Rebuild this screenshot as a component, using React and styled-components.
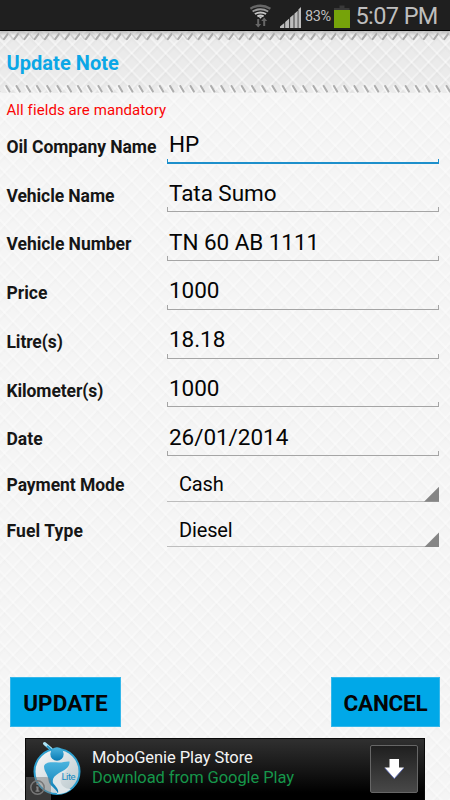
import React from "react";
import styled, { createGlobalStyle } from "styled-components";

const GlobalStyle = createGlobalStyle`
  * { box-sizing: border-box; }
  body { margin: 0; background: #f4f4f4; font-family: Roboto, "Noto Sans", sans-serif; }
`;

const Screen = styled.main`
  width: 450px;
  height: 800px;
  overflow: hidden;
  display: flex;
  flex-direction: column;
  color: #050505;
  background:
    repeating-linear-gradient(46deg, rgba(255,255,255,.35) 0 .8px, transparent 2px 8px, rgba(0,0,0,.01) 11px, rgba(255,255,255,.35) 12.2px),
    repeating-linear-gradient(-46deg, rgba(255,255,255,.35) 0 .8px, transparent 2px 8px, rgba(0,0,0,.013) 11px, rgba(255,255,255,.35) 12.2px),
    #f5f5f5;
`;

const StatusBar = styled.header`
  height: 31px;
  flex: none;
  background: #1f1f1f;
  border-bottom: 1px solid #000;
  display: flex;
  justify-content: flex-end;
  padding-right: 12px;
`;

const StatusIcons = styled.svg`
  width: 56px;
  height: 30px;
  flex: none;
`;

const Percent = styled.span`
  width: 30px;
  padding-left: 1px;
  font-size: 14.5px;
  line-height: 34px;
  color: #bebebe;
  white-space: nowrap;
  letter-spacing: -0.35px;
`;

const Battery = styled.svg`
  width: 20px;
  height: 30px;
  flex: none;
`;

const Clock = styled.span`
  width: 84px;
  padding-left: 1.5px;
  font-size: 23.5px;
  line-height: 32px;
  color: #bebebe;
  white-space: nowrap;
  letter-spacing: -0.6px;
`;

const TitleBar = styled.section`
  height: 62px;
  flex: none;
  display: flex;
  flex-direction: column;
  background:
    linear-gradient(#0003, transparent 5px),
    repeating-linear-gradient(46deg, rgba(255,255,255,.38) 0 .8px, transparent 2px 8px, rgba(0,0,0,.02) 11px, rgba(255,255,255,.38) 12.2px),
    repeating-linear-gradient(-46deg, rgba(255,255,255,.38) 0 .8px, transparent 2px 8px, rgba(0,0,0,.025) 11px, rgba(255,255,255,.38) 12.2px),
    #ebebeb;
`;

const Stitch = styled.svg`
  display: block;
  width: 450px;
  height: 10px;
  flex: none;
`;

const Title = styled.h1`
  margin: 0;
  flex: 1;
  padding-left: 6.5px;
  font-size: 20px;
  line-height: 44px;
  font-weight: 700;
  letter-spacing: 0.05px;
  color: #0ba7e6;
`;

const Notice = styled.p`
  margin: 0;
  height: 22px;
  flex: none;
  padding-left: 6.5px;
  font-size: 15px;
  line-height: 35px;
  letter-spacing: 0.08px;
  color: #fa0505;
`;

const Form = styled.div`
  flex: 1;
  padding: 0 11px 0 6.5px;
`;

const Row = styled.label`
  display: grid;
  grid-template-columns: 160.5px 272px;
  grid-template-rows: 100%;
  height: ${(p) => (p.$compact ? 45.7 : 48.72)}px;
`;

const Label = styled.span`
  font-size: 17.5px;
  font-weight: 700;
  line-height: ${(p) => (p.$compact ? 58.5 : 64.5)}px;
  letter-spacing: ${(p) => p.$spacing || 0}px;
  color: #161616;
  white-space: nowrap;
`;

const Value = styled.span`
  display: flex;
  flex-direction: column;
  justify-content: flex-end;
  color: ${(p) => (p.$focused ? "#1d8fcb" : "#a5a5a5")};
`;

const ValueText = styled.span`
  padding-left: ${(p) => (p.$compact ? 12 : 2)}px;
  font-size: ${(p) => (p.$compact ? 20 : 22.5)}px;
  line-height: ${(p) => (p.$compact ? 34 : 28.5)}px;
  letter-spacing: ${(p) => p.$spacing || 0}px;
  color: #050505;
  white-space: nowrap;
`;

const Bracket = styled.span`
  height: 5px;
  flex: none;
  border: 1px solid currentColor;
  border-top: 0;
  border-bottom-width: ${(p) => (p.$focused ? 2 : 1)}px;
`;

const SpinnerLine = styled.span`
  height: 15px;
  flex: none;
  border-bottom: 1px solid #bdbdbd;
  display: flex;
  justify-content: flex-end;

  &::after {
    content: "";
    width: 15px;
    height: 15px;
    background: #858585;
    clip-path: polygon(100% 0, 100% 100%, 0 100%);
  }
`;

const SpinnerText = styled(ValueText)`
  margin-bottom: -14.6px;
`;

const Actions = styled.div`
  display: flex;
  justify-content: space-between;
  padding: 0 10px;
  height: 61px;
  flex: none;
`;

const ActionButton = styled.button`
  width: ${(p) => p.$width}px;
  height: 50px;
  border: 1px solid #35b7ea;
  padding: 2px 0 0;
  background: #00a8e8;
  color: #050505;
  font: 700 22.5px Roboto, sans-serif;
  letter-spacing: ${(p) => p.$spacing || 0}px;
`;

const AdBanner = styled.aside`
  width: 400px;
  height: 62px;
  margin-left: 25px;
  flex: none;
  display: flex;
  border: 1px solid #090909;
  border-bottom: 0;
  background: linear-gradient(#303030, #171717 48%, #000 88%);
`;

const AdLogo = styled.svg`
  width: 66px;
  height: 62px;
  flex: none;
`;

const AdCopy = styled.div`
  flex: 1;
  padding-top: 8.5px;
  font-size: 16.5px;
  line-height: 20px;
  white-space: nowrap;
`;

const AdTitle = styled.div`
  color: #f4f4f4;
  letter-spacing: -0.08px;
`;

const AdLink = styled(AdTitle)`
  color: #16964a;
`;

const Download = styled.div`
  width: 48px;
  height: 48px;
  margin: 6px 6px 0 0;
  flex: none;
  border: 1px solid #666;
  border-radius: 2px;
  background: linear-gradient(#1f1f1f, #484848);
`;

const fields = [
  { label: "Oil Company Name", value: "HP", focused: true, spacing: -0.05 },
  { label: "Vehicle Name", value: "Tata Sumo", spacing: -0.08 },
  { label: "Vehicle Number", value: "TN 60 AB 1111", spacing: -0.05 },
  { label: "Price", value: "1000" },
  { label: "Litre(s)", value: "18.18", spacing: -0.1 },
  { label: "Kilometer(s)", value: "1000", spacing: -0.1 },
  { label: "Date", value: "26/01/2014" },
];

const selects = [
  { label: "Payment Mode", value: "Cash", spacing: -0.05 },
  { label: "Fuel Type", value: "Diesel", spacing: 0.12 },
];

const stitches = Array.from({ length: 46 }, (_, i) => i * 10.24);

function TopStitches() {
  return (
    <Stitch viewBox="0 0 450 10">
      {stitches.map((x) => (
        <g key={x} fill="none" strokeLinecap="round">
          <path d={`M${x - 1.2} 3l3.8 5`} stroke="#cfcfcf" strokeWidth="1.6" />
          <path d={`M${x + 4} 8.2l3.9-5.4`} stroke="#ababab" strokeWidth="2" />
        </g>
      ))}
    </Stitch>
  );
}

function BottomStitches() {
  return (
    <Stitch viewBox="0 0 450 10">
      {stitches.map((x) => (
        <g key={x} fill="none" strokeLinecap="round">
          <path d={`M${x - 5.6} 1.7l3.4 5.6`} stroke="#f8f8f8" strokeWidth="1.8" />
          <path d={`M${x - 4} 1l3.3 5.4`} stroke="#adadad" strokeWidth="2" />
        </g>
      ))}
    </Stitch>
  );
}

export default function App() {
  return (
    <Screen>
      <GlobalStyle />
      <StatusBar>
        <StatusIcons viewBox="248 0 56 30">
          <g fill="none" strokeWidth="2">
            <path d="M250.4 8.7q10-5.8 20 0" stroke="#666" strokeWidth="2.4" />
            <path d="M252.6 11.5q7.8-4.6 15.6 0" stroke="#999" />
            <path d="M254.9 14q5.6-3.2 11.2 0" stroke="#c4c4c4" />
            <path d="M257.4 16.4q3.1-1.8 6.2 0" stroke="#c8c8c8" />
          </g>
          <path d="M258.5 16.6h4l-2 2.2z" fill="#ccc" />
          <path d="M257.2 19h2v5h2l-3 3.4-3-3.4h2zM263.2 26v-5h-2l3-3.4 3 3.4h-2v5z" fill="#666" />
          <path d="M280 28v-1.5l4.3-3.5v5zM285.2 28v-6l4-3.5V28zM290.1 28V17.5l3.5-3V28zM294.4 28V13.8l3.3-3V28zM298.4 28V9.5l2.600-2.500V28z" fill="#bdbdbd" />
        </StatusIcons>
        <Percent>83%</Percent>
        <Battery viewBox="0 0 20 30">
          <path d="M5.5 5.5h5V8h5v2H0V8h5.500z" fill="#393939" />
          <path d="M0 10h16v18H0z" fill="#76a30a" />
        </Battery>
        <Clock>5:07 PM</Clock>
      </StatusBar>
      <TitleBar>
        <TopStitches />
        <Title>Update Note</Title>
        <BottomStitches />
      </TitleBar>
      <Notice>All fields are mandatory</Notice>
      <Form>
        {fields.map((f) => (
          <Row key={f.label}>
            <Label $spacing={f.spacing}>{f.label}</Label>
            <Value $focused={f.focused}>
              <ValueText $spacing={-0.05}>{f.value}</ValueText>
              <Bracket $focused={f.focused} />
            </Value>
          </Row>
        ))}
        {selects.map((s) => (
          <Row key={s.label} $compact>
            <Label $compact $spacing={s.spacing}>{s.label}</Label>
            <Value>
              <SpinnerText $compact $spacing={-0.15}>{s.value}</SpinnerText>
              <SpinnerLine />
            </Value>
          </Row>
        ))}
      </Form>
      <Actions>
        <ActionButton $width={111} $spacing={0.1}>UPDATE</ActionButton>
        <ActionButton $width={109} $spacing={-0.2}>CANCEL</ActionButton>
      </Actions>
      <AdBanner>
        <AdLogo viewBox="26 739 66 62">
          <defs>
            <linearGradient id="orb" x1="0" y1="0" x2="1" y2="1">
              <stop stopColor="#fafafa" />
              <stop offset="1" stopColor="#b8c6cc" />
            </linearGradient>
            <linearGradient id="genie" x1="0" y1="0" x2="0" y2="1">
              <stop stopColor="#4bb4df" />
              <stop offset="1" stopColor="#087bb4" />
            </linearGradient>
          </defs>
          <circle cx="57" cy="771.5" r="22.5" fill="url(#orb)" stroke="#2c9fcf" strokeWidth="2" />
          <path d="M50 777C48 785 56 786 57 794C63 794 68 792 71 789C64 789 59 784 61 778C63 773 69 770 69.500 764L60 768Z" fill="#dfe6e9" />
          <path d="M44 766C46 761 54 762.500 59 762.500C63 762.500 66 761 69.500 761.500C70 768 64 770 59 773C54 776 52 779 53 783C56 787 59 789 58 793.500C55 787 49 786 48.500 780C48 774 44 772 44 766Z" fill="url(#genie)" />
          <path d="M44.500 743.500l6.500 5.500" stroke="#aee4f7" strokeWidth="3" strokeLinecap="round" />
          <path d="M47 746l5.500 5" stroke="#2295c7" strokeWidth="2" />
          <circle cx="57" cy="754" r="6.700" fill="url(#genie)" />
          <text x="61.500" y="780" fontFamily="Roboto" fontSize="9.500" fill="#168bc1" textLength="14">Lite</text>
          <path d="M26 777h20q5 0 5 5v19H26z" fill="#777" opacity=".48" />
          <circle cx="37.500" cy="787.500" r="6.700" fill="none" stroke="#777" strokeWidth="1.500" />
          <path d="M36.500 783h2v2h-2zM36 786.500h2.500v4h1v1.200h-4v-1.200h1v-3H36z" fill="#858585" />
        </AdLogo>
        <AdCopy>
          <AdTitle>MoboGenie Play Store</AdTitle>
          <AdLink>Download from Google Play</AdLink>
        </AdCopy>
        <Download>
          <svg width="46" height="46" viewBox="0 0 46 46">
            <path d="M18.500 13h9.500v8.500h5L23.300 32.500 13.500 21.500h5z" fill="#fff" />
            <path d="M13.800 22l9.500 10.700L32.800 22" fill="none" stroke="#6474c8" strokeWidth=".8" />
          </svg>
        </Download>
      </AdBanner>
    </Screen>
  );
}
